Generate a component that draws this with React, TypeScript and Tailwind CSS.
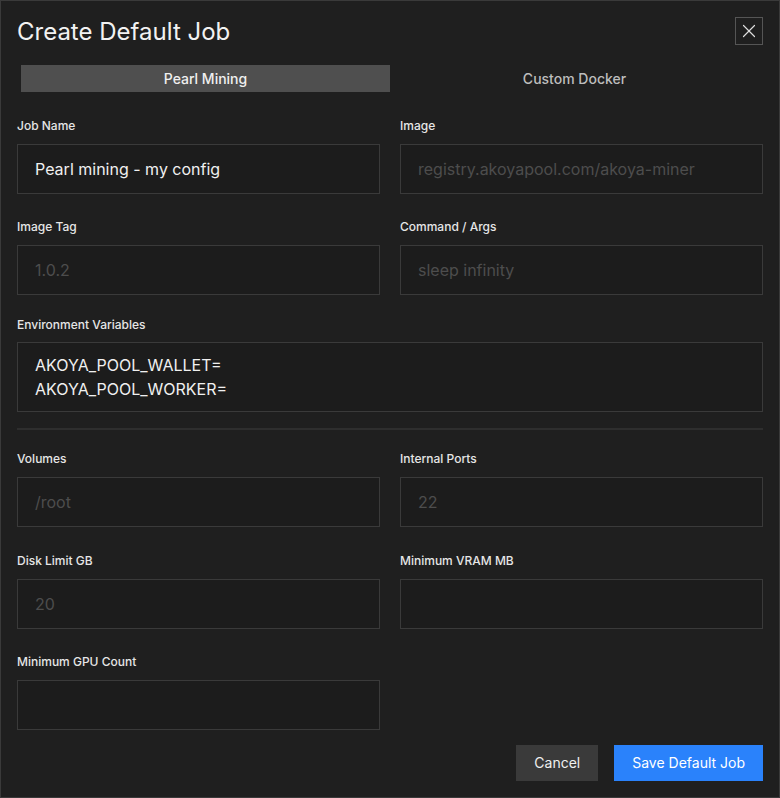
import { X } from 'lucide-react';

const Field = ({ label, value, placeholder }: { label: string; value?: string; placeholder?: string }) => {
  return (
    <div className="flex flex-col">
      <label className="h-4 text-xs leading-4 font-medium text-[#e6e6e6] mb-[10px]">{label}</label>
      <div className="h-[50px] border border-[#3a3a3a] bg-[#1c1c1c] px-[17px] flex items-center text-base">
        {value ? (
          <span className="text-[#f0f0f0]">{value}</span>
        ) : (
          <span className="text-[#4d4d4d]">{placeholder}</span>
        )}
      </div>
    </div>
  );
};

export default function App() {
  return (
    <div className="w-[780px] h-[798px] bg-[#1f1f1f] border border-[#3a3a3a] text-white font-['Inter',sans-serif] px-4 pt-[13px] flex flex-col">
      <div className="flex items-start justify-between">
        <h1 className="mt-[2px] text-2xl leading-8 font-normal text-[#f2f2f2]">Create Default Job</h1>
        <button className="mt-[3px] w-7 h-7 border border-[#555] flex items-center justify-center text-[#ddd]">
          <X size={22} strokeWidth={1.3} />
        </button>
      </div>

      <div className="mt-[13px] px-1 py-1 flex">
        <div className="flex-1 h-[27px] bg-[#4f4f4f] flex items-center justify-center text-sm font-medium text-[#f0f0f0]">
          Pearl Mining
        </div>
        <div className="flex-1 h-[27px] flex items-center justify-center text-sm font-medium text-[#bdbdbd]">
          Custom Docker
        </div>
      </div>

      <div className="mt-[22px] grid grid-cols-2 gap-x-5">
        <Field label="Job Name" value="Pearl mining - my config" />
        <Field label="Image" placeholder="registry.akoyapool.com/akoya-miner" />
      </div>

      <div className="mt-[25px] grid grid-cols-2 gap-x-5">
        <Field label="Image Tag" placeholder="1.0.2" />
        <Field label="Command / Args" placeholder="sleep infinity" />
      </div>

      <div className="mt-[22px] flex flex-col">
        <label className="h-4 text-xs leading-4 font-medium text-[#e6e6e6] mb-[9px]">Environment Variables</label>
        <div className="h-[70px] border border-[#3a3a3a] bg-[#1c1c1c] px-[17px] py-[10px] text-base leading-6 text-[#f0f0f0]">
          <div>AKOYA_POOL_WALLET=</div>
          <div>AKOYA_POOL_WORKER=</div>
        </div>
      </div>

      <div className="mt-4 h-[2px] bg-[#2e2e2e]" />

      <div className="mt-[21px] grid grid-cols-2 gap-x-5">
        <Field label="Volumes" placeholder="/root" />
        <Field label="Internal Ports" placeholder="22" />
      </div>

      <div className="mt-[26px] grid grid-cols-2 gap-x-5">
        <Field label="Disk Limit GB" placeholder="20" />
        <Field label="Minimum VRAM MB" placeholder="" />
      </div>

      <div className="mt-[25px] grid grid-cols-2 gap-x-5">
        <Field label="Minimum GPU Count" placeholder="" />
      </div>

      <div className="mt-[15px] flex justify-end gap-4">
        <button className="h-9 px-[18px] bg-[#3a3a3a] text-sm text-[#f0f0f0]">Cancel</button>
        <button className="h-9 px-[18px] bg-[#2a82fb] text-sm text-white">Save Default Job</button>
      </div>
    </div>
  );
}
